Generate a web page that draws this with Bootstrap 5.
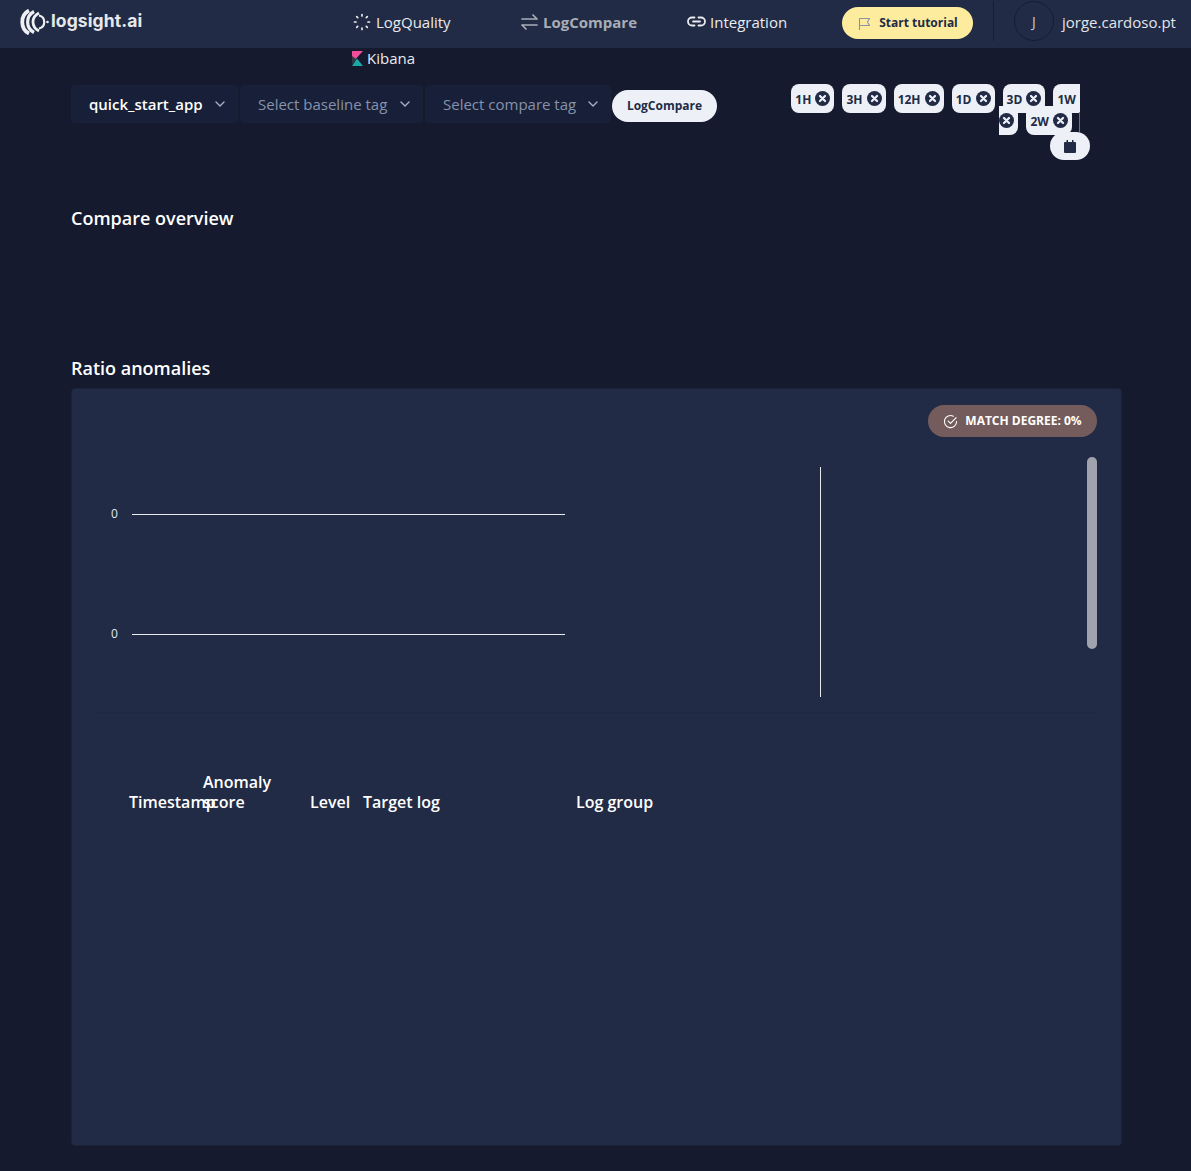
<!DOCTYPE html>
<html lang="en">
<head>
    <meta charset="UTF-8">
    <title>logsight.ai - LogCompare</title>
    <link href="https://cdn.jsdelivr.net/npm/bootstrap@5.3.0/dist/css/bootstrap.min.css" rel="stylesheet">
    <style>
        body { background: #151a2e; color: #fff; font-family: "Open Sans", "Liberation Sans", sans-serif; font-size: 15px; min-height: 1171px; }
        .top-nav { height: 48px; background: #212b45; padding: 0 15px 0 20px; flex-wrap: nowrap; align-items: flex-start; }
        .brand-box { width: 332px; height: 43px; gap: 1px; }
        .brand-text { font-family: Inter, "Open Sans", sans-serif; font-size: 17.500px; font-weight: 700; color: #e6e8ec; letter-spacing: .1px; }
        .nav-links { width: 490px; margin: 0; padding: 0; list-style: none; align-content: flex-start; }
        .nav-links li { height: 36px; padding-top: 4px; }
        .nav-links a { color: #e9ebef; text-decoration: none; font-size: 15px; display: flex; align-items: center; height: 36px; }
        .nav-links svg { margin-right: 5px; }
        .nav-links .link-integration svg { margin-right: 4px; }
        .nav-links .link-kibana svg { margin-right: 4px; }
        .link-quality { width: 169px; padding-left: 1px; }
        .link-compare { width: 166px; }
        .link-compare a { color: #a9adb6; font-weight: 700; }
        .link-integration { width: 155px; }
        .link-kibana { width: 100%; }
        .tutorial-btn { background: #feec9e; color: #212b45; border: 0; border-radius: 16px; height: 32px; width: 131px; font-size: 12px; font-weight: 700; margin-top: 7px; padding: 0 0 0 1px; }
        .nav-sep { width: 1px; height: 40px; background: #161d33; margin: 1px 20px 0 20px; }
        .avatar-ring { width: 40px; height: 40px; border: 1px solid #161d33; border-radius: 50%; font-size: 14px; color: #c9ccd4; margin-top: 1px; }
        .user-name { font-size: 15px; color: #e3e5ea; margin: 12px 0 0 8px; line-height: 20px; }
        .page-wrap { padding: 0 69px 0 71px; }
        .filter-row { height: 142px; padding-top: 37px; }
        .tag-select { background-color: #172038; background-image: url("data:image/svg+xml,%3csvg xmlns='http://www.w3.org/2000/svg' viewBox='0 0 12 12'%3e%3cpath fill='none' stroke='%23a9b0c0' stroke-width='1.4' stroke-linecap='round' stroke-linejoin='round' d='M2 4l4 4 4-4'/%3e%3c/svg%3e"); background-position: right 11px center; background-size: 12px; border: 1px solid #192139; border-radius: 4px; height: 38px; color: #8792ab; font-size: 15px; padding: 0 30px 0 17px; box-shadow: none; }
        .tag-app { width: 167px; color: #fff; font-weight: 600; margin-right: 2px; }
        .tag-base { width: 183px; margin-right: 2px; }
        .tag-comp { width: 186px; margin-right: 1px; }
        .compare-btn { background: #eef0f7; color: #212b45; border: 0; border-radius: 16px; height: 32px; width: 105px; padding: 0; font-size: 12px; font-weight: 700; margin-top: 5px; }
        .time-box { position: relative; width: 300px; margin-left: 63px; margin-top: 4px; line-height: 22px; font-size: 12px; font-weight: 700; color: #212b45; text-align: right; }
        .time-box::after { content: ""; position: absolute; right: 0; top: 23px; width: 1px; height: 20px; background: #6f7382; }
        .time-chip { background: #eef0f7; border-radius: 8px; padding: 7px 4px 5px 4px; margin-right: 8px; word-spacing: 1px; }
        .chip-x { display: inline-block; width: 15px; height: 15px; vertical-align: -2px; }
        .cal-chip { background: #eef0f7; border-radius: 14px; width: 40px; height: 28px; margin: -1px -10px 0 auto; }
        .sect-title { font-size: 18px; font-weight: 600; line-height: 24px; margin: 0; }
        .overview-space { height: 166px; padding-top: 16px; }
        .ratio-title { margin-bottom: 8px; }
        .ratio-card { background: #212b45; border: 1px solid #1b2339; border-radius: 4px; height: 758px; padding: 16px 24px 0 24px; }
        .match-pill { background: #745c5c; border-radius: 16px; height: 32px; width: 169px; font-size: 12px; font-weight: 700; gap: 7px; }
        .chart-row { height: 255px; margin-top: 20px; }
        .chart-left { width: 725px; flex: none; }
        .chart-right { width: 276px; flex: none; }
        .fake-scroll { width: 10px; height: 192px; background: #a0a2ae; border-radius: 5px; }
        .split-line { height: 1px; background: #1e2840; margin: 0; }
        .log-table { table-layout: fixed; width: 967px; margin: 39px 0 0 33px; --bs-table-bg: transparent; --bs-table-color: #fff; }
        .log-table th { font-size: 16px; font-weight: 600; line-height: 20px; padding: 0; vertical-align: bottom; white-space: normal; border: 0; height: 60px; }
        .col-stamp { width: 74px; }
        .col-score { width: 107px; }
        .col-level { width: 53px; }
        .col-target { width: 213px; }
    </style>
</head>
<body>

<nav class="navbar top-nav">
    <div class="brand-box d-flex align-items-center">
        <svg width="30" height="26" viewBox="0 0 30 26">
            <g fill="none" stroke="#eef0f3">
                <path d="M9 1.500C0 6 0 20 9 24.500" stroke-width="3.800"/>
                <path d="M14 2.500C5.500 7 5.500 19 14 23.500" stroke-width="3.200"/>
                <path d="M19 4C11 8 11 18 19 22" stroke-width="2.800"/>
                <path d="M19 6.500C26 8 26 18 19 19.500" stroke-width="2.200"/>
            </g>
            <circle cx="27.500" cy="13" r="1.300" fill="#eef0f3"/>
        </svg>
        <span class="brand-text">logsight.ai</span>
    </div>
    <ul class="nav-links d-flex flex-wrap">
        <li class="link-quality"><a href="#">
            <svg width="18" height="18" viewBox="0 0 18 18" fill="none" stroke="#e9ebef" stroke-width="1.700" stroke-linecap="round"><path d="M9 1.500v1.500M9 15v1.500M1.500 9H3M15 9h1.500M3.700 3.700l1 1M13.300 13.300l1 1M3.700 14.300l1-1M13.300 4.700l1-1"/></svg>LogQuality</a></li>
        <li class="link-compare"><a href="#">
            <svg width="17" height="18" viewBox="0 0 17 18" fill="none" stroke="#a9adb6" stroke-width="1.700" stroke-linecap="round" stroke-linejoin="round"><path d="M1 6h15M12 2l4 4M16 12H1M5 16l-4-4"/></svg>LogCompare</a></li>
        <li class="link-integration"><a href="#">
            <svg width="19" height="18" viewBox="0 0 19 18" fill="none" stroke="#e9ebef" stroke-width="1.800" stroke-linecap="round"><path d="M7.500 4.500H5a4 4 0 0 0 0 8h2.500M11.500 4.500H14a4 4 0 0 1 0 8h-2.500M6 8.500h7"/></svg>Integration</a></li>
        <li class="link-kibana"><a href="#">
            <svg width="11" height="15" viewBox="0 0 11 15"><path d="M0 0h11L0 12z" fill="#f04e98"/><path d="M0 5l4.500 3.500L0 13z" fill="#343741"/><path d="M0 15l5-7.500L11 15z" fill="#1ba9a5"/></svg>Kibana</a></li>
    </ul>
    <button class="btn tutorial-btn" type="button">
        <svg class="me-2" width="13" height="14" viewBox="0 0 13 14" fill="none" stroke="#8b93a8" stroke-width="1.100" stroke-linejoin="round"><path d="M1.500 13V1.500h10L9.500 5l2 3.500h-10"/></svg>Start tutorial</button>
    <div class="nav-sep"></div>
    <div class="avatar-ring d-flex align-items-center justify-content-center">J</div>
    <div class="user-name">jorge.cardoso.pt</div>
</nav>

<div class="page-wrap">
    <div class="filter-row d-flex align-items-start">
        <select class="form-select tag-select tag-app"><option>quick_start_app</option></select>
        <select class="form-select tag-select tag-base"><option>Select baseline tag</option></select>
        <select class="form-select tag-select tag-comp"><option>Select compare tag</option></select>
        <button class="btn compare-btn" type="button">LogCompare</button>
        <div class="time-box">
            <div>
                <span class="time-chip">1H <svg class="chip-x" viewBox="0 0 16 16"><use href="#x-mark"/></svg></span><span class="time-chip">3H <svg class="chip-x" viewBox="0 0 16 16"><use href="#x-mark"/></svg></span><span class="time-chip">12H <svg class="chip-x" viewBox="0 0 16 16"><use href="#x-mark"/></svg></span><span class="time-chip">1D <svg class="chip-x" viewBox="0 0 16 16"><use href="#x-mark"/></svg></span><span class="time-chip">3D <svg class="chip-x" viewBox="0 0 16 16"><use href="#x-mark"/></svg></span><span class="time-chip">1W&nbsp;<wbr><svg class="chip-x" viewBox="0 0 16 16"><use href="#x-mark"/></svg></span><span class="time-chip">2W <svg class="chip-x" viewBox="0 0 16 16"><use href="#x-mark"/></svg></span>
            </div>
            <div class="cal-chip d-flex align-items-center justify-content-center">
                <svg width="12" height="13" viewBox="0 0 12 13" fill="#212b45"><path d="M0 3a1 1 0 0 1 1-1h10a1 1 0 0 1 1 1v9a1 1 0 0 1-1 1H1a1 1 0 0 1-1-1z"/><path d="M2.500 0h1.500v2H2.500zM8 0h1.500v2H8z"/></svg>
            </div>
        </div>
    </div>

    <div class="overview-space">
        <h2 class="sect-title">Compare overview</h2>
    </div>

    <h2 class="sect-title ratio-title">Ratio anomalies</h2>
    <div class="ratio-card">
        <div class="d-flex justify-content-end">
            <div class="match-pill d-flex align-items-center justify-content-center">
                <svg width="15" height="15" viewBox="0 0 16 16" fill="none" stroke="#fff" stroke-width="1.200" stroke-linecap="round" stroke-linejoin="round"><path d="M14.500 8A6.500 6.500 0 1 1 11 2.300"/><path d="M5.500 7.500L8 10l6-6"/></svg>
                <span>MATCH DEGREE: 0%</span>
            </div>
        </div>
        <div class="chart-row d-flex">
            <svg class="chart-left" height="255" viewBox="0 0 725 255">
                <text x="15" y="61" font-size="12" fill="#dfe9f2" font-family="Open Sans">0</text>
                <line x1="36" y1="57.500" x2="469" y2="57.500" stroke="#e8eaee"/>
                <text x="15" y="181" font-size="12" fill="#dfe9f2" font-family="Open Sans">0</text>
                <line x1="36" y1="177.500" x2="469" y2="177.500" stroke="#e8eaee"/>
                <line x1="724.500" y1="10" x2="724.500" y2="240" stroke="#e8eaee"/>
            </svg>
            <div class="chart-right d-flex justify-content-end">
                <div class="fake-scroll"></div>
            </div>
        </div>
        <div class="split-line"></div>
        <table class="table log-table">
            <colgroup><col class="col-stamp"><col class="col-score"><col class="col-level"><col class="col-target"><col></colgroup>
            <thead>
                <tr>
                    <th>Timestamp</th>
                    <th>Anomaly score</th>
                    <th>Level</th>
                    <th>Target log</th>
                    <th>Log group</th>
                </tr>
            </thead>
        </table>
    </div>
</div>

<svg width="0" height="0" style="position:absolute">
    <symbol id="x-mark" viewBox="0 0 16 16">
        <circle cx="8" cy="8" r="8" fill="#212b45"/>
        <path d="M5.300 5.300l5.400 5.400M10.700 5.300l-5.400 5.400" stroke="#eef0f7" stroke-width="2.400" stroke-linecap="round"/>
    </symbol>
</svg>

<script src="https://cdn.jsdelivr.net/npm/bootstrap@5.3.0/dist/js/bootstrap.bundle.min.js"></script>
</body>
</html>
